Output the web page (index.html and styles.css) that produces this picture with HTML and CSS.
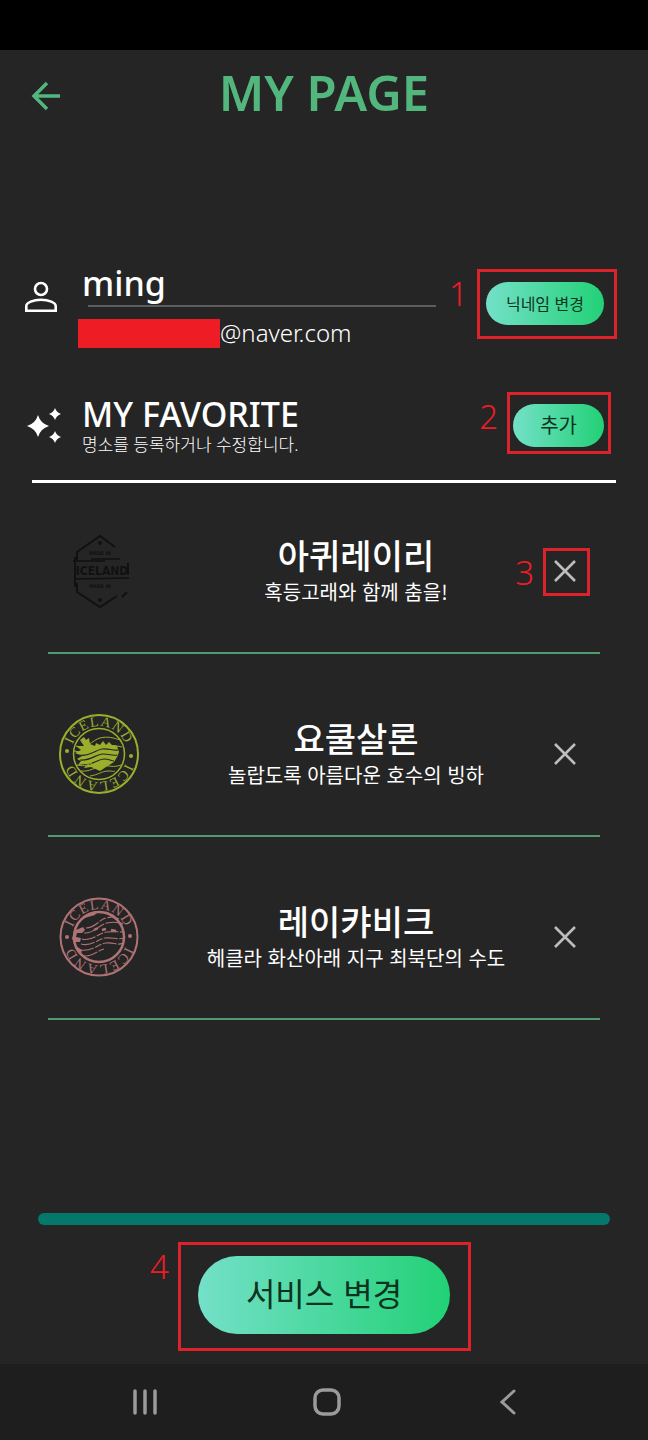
FILE: index.html
```html
<!DOCTYPE html>
<html lang="ko">
<head>
<meta charset="utf-8">
<meta name="viewport" content="width=device-width, initial-scale=1">
<title>MY PAGE</title>
<link rel="stylesheet" href="styles.css">
</head>
<body>
<div class="status-bar"></div>
<header class="header">
  <button class="icon-button back" aria-label="뒤로">
    <svg width="30" height="30" viewBox="0 0 30 30" fill="none" stroke="#53b67d" stroke-width="3.500"><path d="M29 15H4M16 2L3 15l13 13"/></svg>
  </button>
  <h1 class="title">MY PAGE</h1>
</header>

<main class="main">
  <section class="row profile">
    <svg class="row-icon" width="34" height="32" viewBox="0 0 34 32" fill="none" stroke="#fff" stroke-width="2.6"><circle cx="17" cy="8" r="6"/><path d="M2.3 29.7V25c0-3.500 7-6.200 14.700-6.200S31.700 21.500 31.700 25v4.700z"/></svg>
    <div class="profile-text">
      <input class="nickname" type="text" value="ming" aria-label="닉네임">
      <div class="email"><span class="redaction"></span><span>@naver.com</span></div>
    </div>
    <div class="marked">
      <button class="pill pill-small">닉네임 변경</button>
      <span class="frame frame-1"><span class="number">1</span></span>
    </div>
  </section>

  <section class="row favorite">
    <svg class="row-icon" width="36" height="36" viewBox="0 0 36 36" fill="#fff"><path d="M12 7q2.500 8.500 11 11-8.500 2.500-11 11Q9.500 20.500 1 18 9.500 15.500 12 7zM29 0q1.500 4.500 6 6-4.500 1.500-6 6-1.500-4.500-6-6 4.500-1.500 6-6zM29 23q1.500 4.500 6 6-4.500 1.500-6 6-1.500-4.500-6-6 4.500-1.500 6-6z"/></svg>
    <div class="favorite-text">
      <h2 class="favorite-title">MY FAVORITE</h2>
      <p class="favorite-note">명소를 등록하거나 수정합니다.</p>
    </div>
    <div class="marked">
      <button class="pill">추가</button>
      <span class="frame frame-2"><span class="number">2</span></span>
    </div>
  </section>

  <ul class="places">
    <li class="place">
      <svg class="stamp" width="82" height="82" viewBox="0 0 82 82" fill="none" stroke="#111" stroke-width="2">
        <path d="M19 31v-9L42 6l15 11M19 53v9l23 15 17-11M64 67l5-5"/>
        <path d="M15 31h32M33 29h29M17 49l54-1" stroke-width="1.500"/>
        <path d="M17 27v30M70 33v12" stroke-width="2"/>
        <circle cx="42" cy="13" r="1"/><circle cx="42" cy="70" r="1"/>
        <g class="stamp-text" fill="#111" stroke="none" text-anchor="middle"><text x="44" y="45" font-size="12">ICELAND</text><text x="42" y="25" font-size="5">MADE IN</text><text x="42" y="58" font-size="5">MADE IN</text></g>
      </svg>
      <div class="place-text"><h3 class="place-name">아퀴레이리</h3><p class="place-note">혹등고래와 함께 춤을!</p></div>
      <div class="marked">
        <button class="icon-button remove" aria-label="아퀴레이리 삭제"><svg width="24" height="24" viewBox="0 0 24 24" stroke="#bdbdbd" stroke-width="2.600"><path d="M2 2l20 20M22 2L2 22"/></svg></button>
        <span class="frame frame-3"><span class="number">3</span></span>
      </div>
    </li>
    <li class="place">
      <svg class="stamp" width="82" height="82" viewBox="0 0 82 82" fill="none" stroke="#9caf2d">
        <defs><path id="arc-top" d="M13 41a28 28 0 0 1 56 0"/><path id="arc-bottom" d="M69 41a28 28 0 0 1-56 0"/></defs>
        <circle cx="41" cy="41" r="39" stroke-width="2"/><circle cx="41" cy="41" r="25.500" stroke-width="1.500"/>
        <g class="stamp-arc" fill="#9caf2d" stroke="none" text-anchor="middle"><text><textPath href="#arc-top" startOffset="50%">ICELAND</textPath></text><text><textPath href="#arc-bottom" startOffset="50%">ICELAND</textPath></text></g>
        <circle cx="9" cy="38" r="2" fill="#9caf2d" stroke="none"/><circle cx="73" cy="43" r="2" fill="#9caf2d" stroke="none"/>
        <path fill="#9caf2d" stroke="none" d="M22 27l4-3 2 3 3-2 1 6 5 2 1-3 4 2 3-4 3 4 3-3 3 3 5 1 2 6-2 5-3 5-8 5-6 4-9-4-7 1 3-4-9 1 3-4-4-2 5-3-7-3 6-3-5-4 8 0z"/>
        <path d="M18 33c11 4 16-6 24-8s14 0 20 2M16 38c12 3 17-4 25-5s16-1 23 1" stroke-width="1"/>
        <path d="M20 42c12 2 17-5 24-6s10 2 16 1M22 47c11 1 16-6 23-6s9 2 14 1M26 52c9 0 14-6 20-6s7 2 10 2" stroke="#252525" stroke-width="1.200"/>
        <path d="M19 52c9 2 11-1 15-2M23 58c9 1 14-4 21-5s11 2 19-1M32 63c8-1 12-5 18-5s5 1 7 0" stroke-width="1"/>
      </svg>
      <div class="place-text"><h3 class="place-name">요쿨살론</h3><p class="place-note">놀랍도록 아름다운 호수의 빙하</p></div>
      <button class="icon-button remove" aria-label="요쿨살론 삭제"><svg width="24" height="24" viewBox="0 0 24 24" stroke="#bdbdbd" stroke-width="2.600"><path d="M2 2l20 20M22 2L2 22"/></svg></button>
    </li>
    <li class="place">
      <svg class="stamp" width="82" height="82" viewBox="0 0 82 82" fill="none" stroke="#b07375">
        <circle cx="41" cy="41" r="38.500" stroke-width="2"/><circle cx="41" cy="41" r="25" stroke-width="2.500"/>
        <g class="stamp-arc" fill="#b07375" stroke="none" text-anchor="middle"><text><textPath href="#arc-top" startOffset="50%">ICELAND</textPath></text><text><textPath href="#arc-bottom" startOffset="50%">ICELAND</textPath></text></g>
        <circle cx="9" cy="41" r="2" fill="#b07375" stroke="none"/><circle cx="72" cy="40" r="2" fill="#b07375" stroke="none"/>
        <path fill="#b07375" stroke="none" d="M18 34l7-3 2 3-3 3-5 0-1 4 5 1-1 4-5 0 1 4 6 4-1 4-5-4-4-12zM24 23l7-6 8-2-2 4-7 2zM47 15l9 4 7 8-9-6z"/>
        <path d="M28 32c10 0 12-8 20-10s8-1 13 1M26 37c10 1 14-8 23-10s12 0 16 1M24 43c10 3 16-6 25-7s11 0 17 0M23 48c10 3 17-5 24-6s12 2 19 0M22 54c12 2 18-6 26-7s11 3 17 0M26 60c9 1 14-6 20-7" stroke-width="1.100" stroke-dasharray="14 1.500 7 1.500"/>
        <path d="M36 34l4-2M44 34l4-1M53 34l5 1" stroke-width="2.500"/>
      </svg>
      <div class="place-text"><h3 class="place-name">레이캬비크</h3><p class="place-note">헤클라 화산아래 지구 최북단의 수도</p></div>
      <button class="icon-button remove" aria-label="레이캬비크 삭제"><svg width="24" height="24" viewBox="0 0 24 24" stroke="#bdbdbd" stroke-width="2.600"><path d="M2 2l20 20M22 2L2 22"/></svg></button>
    </li>
  </ul>
</main>

<footer class="service">
  <div class="service-bar"></div>
  <div class="marked">
    <button class="pill pill-large">서비스 변경</button>
    <span class="frame frame-4"><span class="number">4</span></span>
  </div>
</footer>
<nav class="system-nav">
  <button class="icon-button" aria-label="최근 앱"><svg width="28" height="28" viewBox="0 0 28 28" fill="none" stroke="#9b9b9b" stroke-width="3.500" stroke-linecap="round"><path d="M4 3v22M14 3v22M24 3v22"/></svg></button>
  <button class="icon-button" aria-label="홈"><svg width="28" height="28" viewBox="0 0 28 28" fill="none" stroke="#9b9b9b" stroke-width="3.500"><rect x="2" y="2" width="24" height="24" rx="8"/></svg></button>
  <button class="icon-button" aria-label="뒤로 가기"><svg width="28" height="28" viewBox="0 0 28 28" fill="none" stroke="#9b9b9b" stroke-width="3" stroke-linecap="round"><path d="M20 3L8 14l12 11"/></svg></button>
</nav>
</body>
</html>
```

FILE: styles.css
```css
* { box-sizing: border-box; }

body {
  margin: 0;
  min-height: 100vh;
  display: flex;
  flex-direction: column;
  background: #252525;
  color: #fff;
  font-family: "Noto Sans", "Noto Sans CJK KR", sans-serif;
}

h1, h2, h3, p, ul { margin: 0; padding: 0; }
button { font-family: inherit; cursor: pointer; }
svg { display: block; }

.status-bar { height: 50px; background: #000; }

.header {
  display: grid;
  grid-template-columns: 1fr auto 1fr;
  align-items: start;
  height: 92px;
  padding: 0 31px;
}
.title { font-size: 49px; font-weight: 600; line-height: 84px; color: #53b67d; }

.icon-button {
  display: grid;
  place-items: center;
  padding: 0;
  border: 0;
  background: none;
}
.back { place-self: center start; }

.main { padding-top: 121px; }

.row {
  display: grid;
  grid-template-columns: 38px 1fr auto;
  column-gap: 16px;
  align-items: start;
  padding: 0 44px 0 24px;
}
.profile { height: 129px; }
.profile .row-icon { margin-top: 18px; }
.profile .marked { margin-top: 19px; }
.profile-text { padding-right: 34px; }

.nickname {
  display: block;
  width: 100%;
  height: 44px;
  padding: 0 0 4px 4px;
  border: 0;
  outline: 0;
  background: linear-gradient(#5c5c5c, #5c5c5c) no-repeat right bottom / calc(100% - 10px) 2px;
  color: #fff;
  font-family: inherit;
  font-size: 34px;
  font-weight: 500;
}
.email {
  display: flex;
  align-items: center;
  margin-top: 10px;
  font-size: 24px;
  font-weight: 300;
  line-height: 32px;
}
.redaction { width: 142px; height: 29px; background: #ee1c25; }

.favorite { height: 88px; }
.favorite .row-icon { margin-top: 16px; justify-self: end; }
.favorite .marked { margin-top: 12px; }
.favorite-text { padding-left: 4px; }
.favorite-title { font-size: 34px; font-weight: 500; line-height: 44px; }
.favorite-note { font-size: 17px; font-weight: 300; line-height: 18px; }

.marked { position: relative; }
.pill {
  display: block;
  height: 43px;
  padding: 0 27px 2px;
  border: 0;
  border-radius: 40px;
  background: linear-gradient(90deg, #74e0c8, #22d176);
  color: #0b3320;
  font-family: "Noto Sans CJK KR", sans-serif;
  font-size: 20px;
}
.pill-small { padding: 0 20px 2px; font-size: 16px; }
.pill-large { height: 78px; padding: 0 48px 6px; font-size: 32px; }

.frame { position: absolute; border: 3px solid #dc232b; pointer-events: none; }
.frame-1 { inset: -13px -13px -14px -9px; }
.frame-2 { inset: -12px -7px -7px -6px; }
.frame-3 { inset: -11px -13px -13px -10px; }
.frame-4 { inset: -14px -21px -17px -20px; }
.number {
  position: absolute;
  right: 100%;
  top: 0;
  margin-right: 12px;
  color: #ee1c25;
  font-size: 33px;
  font-weight: 300;
  line-height: 44px;
}

.places {
  margin: 0 32px;
  padding: 6px 16px 0;
  border-top: 3px solid #fff;
  display: grid;
  gap: 18px;
  list-style: none;
}
.place {
  display: grid;
  grid-template-columns: 102px 1fr 70px;
  align-items: center;
  height: 165px;
  border-bottom: 2px solid #509a70;
}
.stamp { margin-left: 10px; }
.stamp-text { font-family: "DejaVu Sans Condensed", "DejaVu Sans", sans-serif; font-weight: 700; }
.stamp-arc { font-family: "Liberation Serif", serif; font-size: 14px; letter-spacing: 1px; }
.place-text { padding-left: 32px; text-align: center; font-family: "Noto Sans CJK KR", sans-serif; }
.place-name { font-size: 34px; font-weight: 500; line-height: 44px; }
.place-note { font-size: 20px; font-weight: 400; line-height: 30px; padding-bottom: 2px; }
.place .marked, .place > .remove { justify-self: center; }

.service {
  display: flex;
  flex-direction: column;
  align-items: center;
  margin-top: auto;
  padding: 0 38px 30px;
}
.service-bar { align-self: stretch; height: 12px; margin-bottom: 31px; border-radius: 6px; background: #03786b; }

.system-nav {
  display: flex;
  justify-content: space-between;
  align-items: center;
  height: 76px;
  padding: 0 126px 0 131px;
  background: #1e1e1e;
}
```
